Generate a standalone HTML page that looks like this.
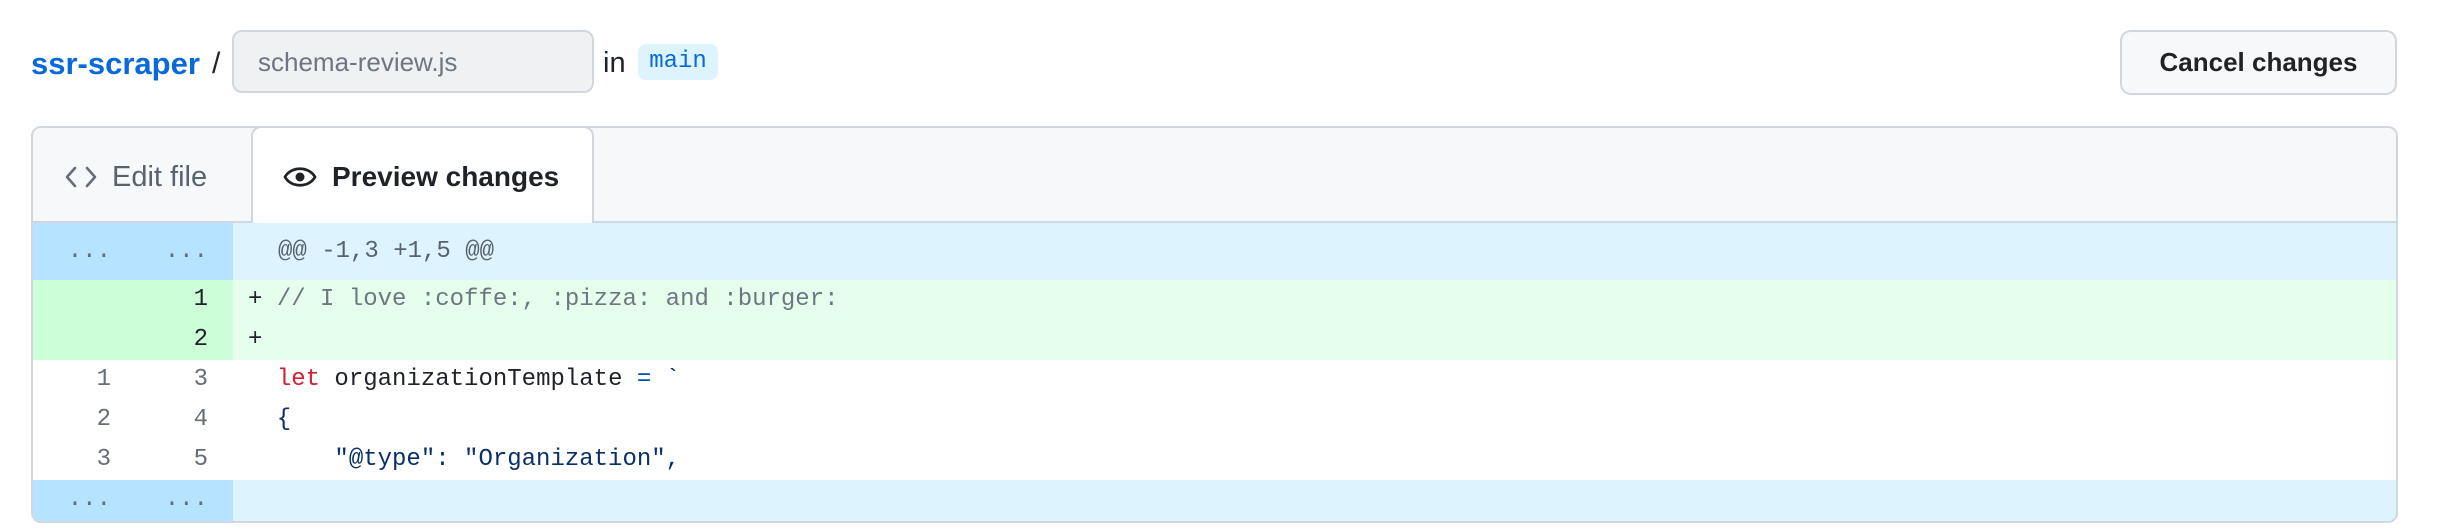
<!DOCTYPE html>
<html><head><meta charset="utf-8"><style>
*{margin:0;padding:0;box-sizing:border-box}
body{width:2450px;height:532px;background:#fff;position:relative;overflow:hidden;font-family:"Liberation Sans",Arial,sans-serif;color:#1f2328}
.a{position:absolute}
.mono{font-family:"Liberation Mono",monospace;font-size:24px}
.row{position:absolute;left:0;right:0;height:40px;line-height:40px}
.n{position:absolute;top:0;height:100%;text-align:right;color:#656d76}
.n1{left:0;width:78px}.n2{left:100px;width:75px}
.g{position:absolute;left:0;top:0;width:200px;height:100%}
.c{position:absolute;left:215px;top:0;white-space:pre}
</style></head><body>
<div class="a" style="left:31px;top:44px;font-size:31px;font-weight:bold;color:#0969da;line-height:40px">ssr-scraper</div>
<div class="a" style="left:212px;top:44px;font-size:30px;color:#1f2328;line-height:40px">/</div>
<div class="a" style="left:232px;top:30px;width:362px;height:63px;background:#eff1f3;border:2px solid #d0d7de;border-radius:10px"></div>
<div class="a" style="left:258px;top:42px;font-size:26px;color:#6e7781;line-height:40px">schema-review.js</div>
<div class="a" style="left:603px;top:43px;font-size:29px;color:#1f2328;line-height:40px">in</div>
<div class="a mono" style="left:638px;top:44px;width:80px;height:36px;background:#ddf4ff;border-radius:8px;color:#0969da;text-align:center;line-height:36px">main</div>
<div class="a" style="left:2120px;top:30px;width:277px;height:65px;background:#f6f8fa;border:2px solid #d0d7de;border-radius:11px;text-align:center;line-height:61px;font-size:26px;font-weight:bold;color:#1f2328">Cancel changes</div>

<div class="a" style="left:31px;top:126px;width:2367px;height:397px;border:2px solid #d0d7de;border-radius:10px;overflow:hidden;background:#fff">
  <div class="a" style="left:0;top:0;right:0;height:95px;background:#f6f8fa;border-bottom:2px solid #d0d7de"></div>
  <svg class="a" style="left:31px;top:37px" width="34" height="24" viewBox="0 0 34 24"><path d="M11 3 L3 12 L11 21 M23 3 L31 12 L23 21" fill="none" stroke="#656d76" stroke-width="2.6" stroke-linecap="round" stroke-linejoin="round"/></svg>
  <div class="a" style="left:79px;top:29px;font-size:29px;color:#59636e;line-height:40px">Edit file</div>
  <div class="a" style="left:218px;top:-2px;width:343px;height:99px;background:#fff;border:2px solid #d0d7de;border-bottom:none;border-radius:10px 10px 0 0"></div>
  <svg class="a" style="left:250px;top:35px" width="34" height="28" viewBox="0 0 34 28"><path d="M2 14 C8 3 26 3 32 14 C26 25 8 25 2 14 Z" fill="none" stroke="#1f2328" stroke-width="2.8"/><circle cx="17" cy="14" r="4.5" fill="#1f2328"/></svg>
  <div class="a" style="left:299px;top:29px;font-size:28px;font-weight:bold;color:#1f2328;line-height:40px">Preview changes</div>

  <div class="a mono" style="left:0;right:0;top:95px;bottom:0">
    <div class="row" style="top:0;height:57px;line-height:57px;background:#ddf4ff"><div class="g" style="background:#b6e3ff"></div><div class="n n1">...</div><div class="n n2">...</div><div class="c" style="left:245px;color:#59636e">@@ -1,3 +1,5 @@</div></div>
    <div class="row" style="top:57px;background:#e6ffec"><div class="g" style="background:#ccffd8"></div><div class="n n2" style="color:#1f2328">1</div><div class="c" style="color:#1f2328">+ <span style="color:#6e7781">// I love :coffe:, :pizza: and :burger:</span></div></div>
    <div class="row" style="top:97px;background:#e6ffec"><div class="g" style="background:#ccffd8"></div><div class="n n2" style="color:#1f2328">2</div><div class="c">+</div></div>
    <div class="row" style="top:137px"><div class="n n1">1</div><div class="n n2">3</div><div class="c">  <span style="color:#cf222e">let</span> organizationTemplate <span style="color:#0550ae">=</span> <span style="color:#0a3069">`</span></div></div>
    <div class="row" style="top:177px"><div class="n n1">2</div><div class="n n2">4</div><div class="c" style="color:#0a3069">  {</div></div>
    <div class="row" style="top:217px"><div class="n n1">3</div><div class="n n2">5</div><div class="c" style="color:#0a3069">      "@type": "Organization",</div></div>
    <div class="row" style="top:257px;height:45px;line-height:40px;background:#ddf4ff"><div class="g" style="background:#b6e3ff"></div><div class="n n1">...</div><div class="n n2">...</div></div>
  </div>
</div>
</body></html>
